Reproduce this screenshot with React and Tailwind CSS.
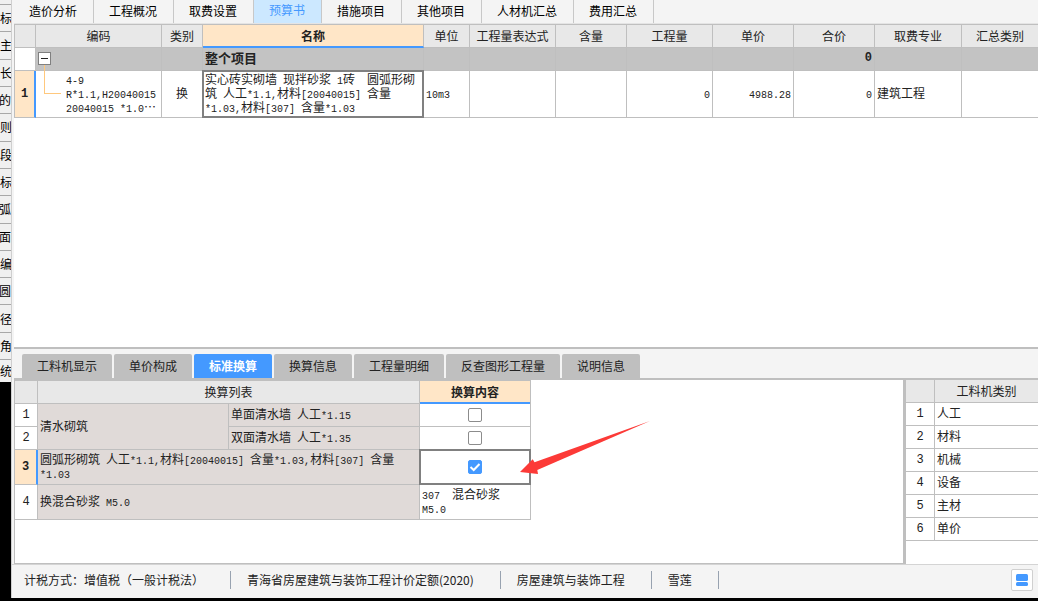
import React, { useState } from 'react';
import clsx from 'clsx';

const MODULE_TABS = ['造价分析', '工程概况', '取费设置', '预算书', '措施项目', '其他项目', '人材机汇总', '费用汇总'];

const DETAIL_TABS = ['工料机显示', '单价构成', '标准换算', '换算信息', '工程量明细', '反查图形工程量', '说明信息'];

// Property panel that the budget window partly covers
const SIDE_LABELS = [
    { text: '标准', cut: 'right' },
    { text: '主', cut: 'right' },
    { text: '长', cut: 'right' },
    { text: '的', cut: 'left' },
    { text: '则', cut: 'right' },
    { text: '段', cut: 'right' },
    { text: '标准', cut: 'right' },
    { text: '含弧', cut: 'left' },
    { text: '剖面', cut: 'left' },
    { text: '编', cut: 'right' },
    { text: '建圆', cut: 'left' },
    { text: '径', cut: 'right' },
    { text: '角', cut: 'right' },
];

const CATEGORIES = ['人工', '材料', '机械', '设备', '主材', '单价'];

const STATUS = ['计税方式：增值税（一般计税法）', '青海省房屋建筑与装饰工程计价定额(2020)', '房屋建筑与装饰工程', '雪莲'];

// Half-width characters take half of a Chinese character
const Mixed = ({ children }) =>
    String(children)
        .split(/([\x20-\x7e]+)/)
        .map((part, i) =>
            i % 2 ? (
                <span key={i} className="font-['Liberation_Mono',monospace] text-[10px] leading-none whitespace-pre">{part}</span>
            ) : (
                part
            )
        );

const Lines = ({ lines }) =>
    lines.map((line) => (
        <div key={line} className="h-3.5 whitespace-nowrap"><Mixed>{line}</Mixed></div>
    ));

const Head = ({ children, active, ...rest }) => (
    <th
        {...rest}
        className={clsx(
            'h-[23px] p-0 text-center last:border-r-0',
            active
                ? 'border-r border-b-2 border-r-[#bfbfbf] border-b-[#4499ff] bg-[#ffe6c7] font-bold'
                : 'border-r border-b border-[#bfbfbf] bg-[#e8e8e8] font-normal'
        )}
    >
        {children}
    </th>
);

const Cell = ({ className, children, ...rest }) => (
    <td {...rest} className={clsx('border-r border-b border-[#bfbfbf] px-0.5 pb-0.5', className)}>{children}</td>
);

const RowNumber = ({ active, children }) => (
    <th
        scope="row"
        className={clsx(
            "border-b border-b-[#bfbfbf] p-0 text-center font-['Liberation_Mono',monospace]",
            active ? 'border-r-2 border-r-[#4499ff] bg-[#ffe6c7] font-bold' : 'border-r border-r-[#bfbfbf] bg-white font-normal'
        )}
    >
        {children}
    </th>
);

const SelectedFrame = () => <span className="pointer-events-none absolute -inset-px border-2 border-[#808080]" />;

const CheckBox = ({ label, checked, onChange }) => (
    <label className="relative mx-auto block size-3.5">
        <input
            type="checkbox"
            aria-label={label}
            checked={checked}
            onChange={onChange}
            className="block size-3.5 appearance-none rounded-xs border border-[#8c8c8c] bg-white checked:border-[#4499ff] checked:bg-[#4499ff]"
        />
        {checked && (
            <svg viewBox="0 0 14 14" className="pointer-events-none absolute inset-0 size-3.5" fill="none" stroke="#fff" strokeWidth="2">
                <path d="M2.5 7 L5.7 10 L11.5 4" />
            </svg>
        )}
    </label>
);

const SidePanel = () => (
    <aside className="flex h-[382px] w-[11px] shrink-0 flex-col overflow-hidden bg-[#f0f0f0] text-black">
        <div className="h-[5px] shrink-0 border-b border-[#a8a8a8]" />
        <div className="flex h-[355px] shrink-0 flex-col">
            {SIDE_LABELS.map(({ text, cut }, i) => (
                <div
                    key={i}
                    className={clsx(
                        'flex min-h-0 flex-1 items-center border-b border-[#a8a8a8] whitespace-nowrap',
                        cut === 'left' && 'justify-end'
                    )}
                >
                    {text}
                </div>
            ))}
        </div>
        <div className="flex flex-1 items-center whitespace-nowrap">统</div>
    </aside>
);

const BudgetTable = () => (
    <table className="w-full table-fixed border-separate border-spacing-0 border-t border-l border-[#bfbfbf]">
        <colgroup>
            <col className="w-[21px]" />
            <col className="w-[126px]" />
            <col className="w-[41px]" />
            <col className="w-[221px]" />
            <col className="w-[46px]" />
            <col className="w-[86px]" />
            <col className="w-[71px]" />
            <col className="w-[86px]" />
            <col className="w-[81px]" />
            <col className="w-[81px]" />
            <col className="w-[87px]" />
            <col />
        </colgroup>
        <thead>
            <tr>
                <Head />
                <Head>编码</Head>
                <Head>类别</Head>
                <Head active>名称</Head>
                <Head>单位</Head>
                <Head>工程量表达式</Head>
                <Head>含量</Head>
                <Head>工程量</Head>
                <Head>单价</Head>
                <Head>合价</Head>
                <Head>取费专业</Head>
                <Head>汇总类别</Head>
            </tr>
        </thead>
        <tbody>
            <tr className="h-[23px] bg-[#c3c3c3] font-bold">
                <Cell className="bg-white" />
                <Cell>
                    <button
                        type="button"
                        aria-label="折叠"
                        className="flex size-[13px] items-center justify-center border border-[#808080] bg-white"
                    >
                        <span className="h-px w-[7px] bg-[#222]" />
                    </button>
                </Cell>
                <Cell />
                <Cell className="text-[13px]">整个项目</Cell>
                <Cell />
                <Cell />
                <Cell />
                <Cell />
                <Cell />
                <Cell className="text-right font-['Liberation_Mono',monospace]">0</Cell>
                <Cell />
                <Cell className="border-r-0" />
            </tr>
            <tr className="h-[47px] bg-white">
                <RowNumber active>1</RowNumber>
                <Cell className="relative">
                    <span className="absolute -top-1.5 left-2 h-[29px] w-[17px] border-b border-l border-[#ffc87d]" />
                    <div className="pl-7">
                        <Lines lines={['4-9', 'R*1.1,H20040015', '20040015 *1.0…']} />
                    </div>
                </Cell>
                <Cell className="text-center">换</Cell>
                <Cell className="relative">
                    <Lines lines={['实心砖实砌墙 现拌砂浆 1砖  圆弧形砌', '筑 人工*1.1,材料[20040015] 含量', '*1.03,材料[307] 含量*1.03']} />
                    <SelectedFrame />
                </Cell>
                <Cell><Mixed>10m3</Mixed></Cell>
                <Cell />
                <Cell />
                <Cell className="text-right"><Mixed>0</Mixed></Cell>
                <Cell className="text-right"><Mixed>4988.28</Mixed></Cell>
                <Cell className="text-right"><Mixed>0</Mixed></Cell>
                <Cell>建筑工程</Cell>
                <Cell className="border-r-0" />
            </tr>
        </tbody>
    </table>
);

const ConversionTable = () => {
    const [checked, setChecked] = useState([false, false, true]);
    const toggle = (i) => setChecked(checked.map((value, n) => (n === i ? !value : value)));

    return (
        <table className="w-[516px] table-fixed border-separate border-spacing-0 border-t border-r border-[#bfbfbf]">
            <colgroup>
                <col className="w-[23px]" />
                <col className="w-[191px]" />
                <col className="w-[191px]" />
                <col className="w-[110px]" />
            </colgroup>
            <thead>
                <tr>
                    <Head />
                    <Head colSpan={2}>换算列表</Head>
                    <Head active>换算内容</Head>
                </tr>
            </thead>
            <tbody>
                <tr className="h-[23px]">
                    <RowNumber>1</RowNumber>
                    <Cell rowSpan={2} className="bg-[#e0dad8]">清水砌筑</Cell>
                    <Cell className="bg-[#e0dad8]"><Lines lines={['单面清水墙 人工*1.15']} /></Cell>
                    <Cell className="border-r-0 pt-0.5">
                        <CheckBox label="单面清水墙" checked={checked[0]} onChange={() => toggle(0)} />
                    </Cell>
                </tr>
                <tr className="h-[23px]">
                    <RowNumber>2</RowNumber>
                    <Cell className="bg-[#e0dad8]"><Lines lines={['双面清水墙 人工*1.35']} /></Cell>
                    <Cell className="border-r-0 pt-0.5">
                        <CheckBox label="双面清水墙" checked={checked[1]} onChange={() => toggle(1)} />
                    </Cell>
                </tr>
                <tr className="h-[35px]">
                    <RowNumber active>3</RowNumber>
                    <Cell colSpan={2} className="bg-[#e0dad8]">
                        <Lines lines={['圆弧形砌筑 人工*1.1,材料[20040015] 含量*1.03,材料[307] 含量', '*1.03']} />
                    </Cell>
                    <Cell className="relative border-r-0 pt-0.5">
                        <CheckBox label="圆弧形砌筑" checked={checked[2]} onChange={() => toggle(2)} />
                        <SelectedFrame />
                    </Cell>
                </tr>
                <tr className="h-[35px]">
                    <RowNumber>4</RowNumber>
                    <Cell colSpan={2} className="bg-[#e0dad8]"><Lines lines={['换混合砂浆 M5.0']} /></Cell>
                    <Cell className="border-r-0"><Lines lines={['307  混合砂浆', 'M5.0']} /></Cell>
                </tr>
            </tbody>
        </table>
    );
};

const CategoryTable = () => (
    <table className="w-full table-fixed border-separate border-spacing-0">
        <colgroup>
            <col className="w-[29px]" />
            <col />
        </colgroup>
        <thead>
            <tr>
                <Head />
                <Head>工料机类别</Head>
            </tr>
        </thead>
        <tbody>
            {CATEGORIES.map((name, i) => (
                <tr key={name} className="h-[23px]">
                    <RowNumber>{i + 1}</RowNumber>
                    <Cell className="border-r-0">{name}</Cell>
                </tr>
            ))}
        </tbody>
    </table>
);

const App = () => {
    const [moduleTab, setModuleTab] = useState('预算书');
    const [detailTab, setDetailTab] = useState('标准换算');

    return (
        <div className="flex h-screen overflow-hidden bg-black font-['Noto_Sans_CJK_SC',sans-serif] text-xs/[14px] text-[#222]">
            <SidePanel />

            <main className="mb-[3px] flex min-w-0 flex-1 flex-col border-l border-[#cfcfcf] bg-[#f4f4f4]">
                <div className="flex min-h-0 flex-1 flex-col pl-0.5">
                    {/* Module tabs */}
                    <nav className="flex h-6 shrink-0 border-b border-[#e4e4e4]">
                        {MODULE_TABS.map((name) => (
                            <button
                                key={name}
                                type="button"
                                onClick={() => setModuleTab(name)}
                                className={clsx(
                                    'border-r border-[#c8c8c8] pr-4 pl-[15px]',
                                    moduleTab === name ? 'bg-[#cce8ff] pb-1 text-[#4499ff]' : 'pb-0.5 text-black'
                                )}
                            >
                                {name}
                            </button>
                        ))}
                    </nav>

                    <section className="min-h-0 flex-1 overflow-hidden bg-white">
                        <BudgetTable />
                    </section>

                    {/* Detail tabs */}
                    <nav className="flex h-[33px] shrink-0 gap-0.5 border-y-2 border-[#bfbfbf] pt-[5px] pl-2">
                        {DETAIL_TABS.map((name) => (
                            <button
                                key={name}
                                type="button"
                                onClick={() => setDetailTab(name)}
                                className={clsx(
                                    'rounded-t-xs px-[15px]',
                                    detailTab === name ? 'bg-[#4499ff] font-bold text-white' : 'bg-[#bfbfbf]'
                                )}
                            >
                                {name}
                            </button>
                        ))}
                    </nav>

                    <div className="flex h-46 shrink-0 bg-white">
                        <section className="relative min-w-0 flex-1 border-b border-l border-[#bfbfbf]">
                            <ConversionTable />
                            <svg viewBox="0 0 132 56" className="pointer-events-none absolute top-10 left-[505px] h-14 w-[132px]">
                                <path d="M0 52 L12.7 39.3 L14.5 42.2 L130 1 L17.3 50 L18 54 Z" fill="#fc3a37" />
                            </svg>
                        </section>
                        <section className="w-[135px] shrink-0 border-l-3 border-[#bfbfbf]">
                            <CategoryTable />
                        </section>
                    </div>
                </div>

                {/* Status bar */}
                <footer className="flex h-[34px] shrink-0 items-center border-t border-[#d4d4d4] pr-[5px] pb-1">
                    {STATUS.map((item, i) => (
                        <span
                            key={item}
                            className={clsx('border-r border-[#98a2b0] py-0.5 pr-[26px] whitespace-nowrap', i === 0 ? 'pl-3' : 'pl-4')}
                        >
                            {item}
                        </span>
                    ))}
                    <button
                        type="button"
                        aria-label="面板布局"
                        className="ml-auto flex size-[22px] items-center justify-center rounded-xs border border-[#d0d0d0] bg-white"
                    >
                        <svg viewBox="0 0 12 12" className="size-3" fill="#4499ff">
                            <rect width="12" height="7" rx="1.5" />
                            <rect y="8" width="12" height="4" rx="1.5" />
                        </svg>
                    </button>
                </footer>
            </main>
        </div>
    );
};

export default App;
